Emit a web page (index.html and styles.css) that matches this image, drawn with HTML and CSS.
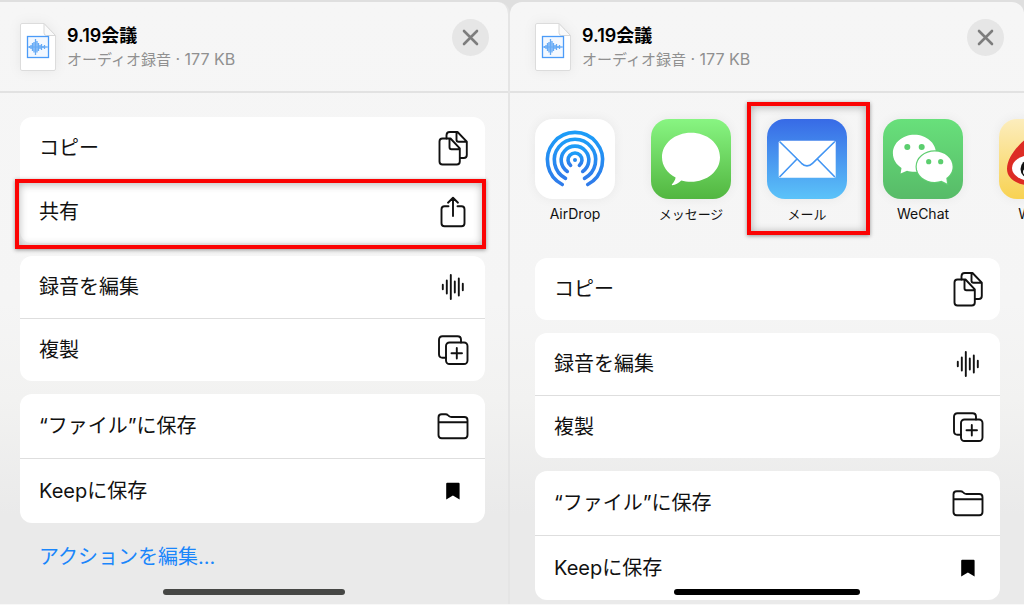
FILE: index.html
```html
<!DOCTYPE html>
<html lang="ja">
<head>
<meta charset="utf-8">
<meta name="viewport" content="width=device-width, initial-scale=1">
<title>9.19会議</title>
<link rel="stylesheet" href="styles.css">
</head>
<body>
<svg class="defs" aria-hidden="true">
  <defs>
    <linearGradient id="g-air" x1="0" y1="0" x2="0" y2="1"><stop offset="0" stop-color="#1c9df8"/><stop offset="1" stop-color="#2f7bea"/></linearGradient>
  </defs>
  <symbol id="i-file" viewBox="0 0 36 48">
    <path d="M2 .5H24L35.500 12.500V46a1.500 1.500 0 0 1-1.500 1.500H2A1.500 1.500 0 0 1 .5 46V2A1.500 1.500 0 0 1 2 .5z" fill="#fff" stroke="#dcdcdc"/>
    <path d="M24 .5V10a2.500 2.500 0 0 0 2.500 2.500h9z" fill="#fafafa" stroke="#d8d8d8"/>
    <rect x="7.500" y="13.500" width="21" height="21" fill="#f3f8ff" stroke="#4b9bf8" stroke-width="1.300"/>
    <path d="M9.500 23v2M11 22v4M12.500 20v8M14 19v10.500M15.500 16v16M17 18v11.500M18.500 20v8M20 22v4M21.500 21v6M23 23v2M24.500 22v4M26 23.500v1" stroke="#66aaf5" stroke-width="1.300"/>
    <path d="M8 24h20" stroke="#66aaf5"/>
  </symbol>
  <symbol id="i-close" viewBox="0 0 37 37"><path d="M12 12l13 13M25 12L12 25" stroke="#7d7d7d" stroke-width="2.600" stroke-linecap="round"/></symbol>
  <symbol id="i-copy" viewBox="0 0 32 36">
    <path d="M9.500 8.500V5.300Q9.500 2 12.800 2H20.500L29.800 11.700V25q0 3-3 3H23M19.500 2V9.700q0 2 2 2h8.300"/>
    <path d="M5.500 8.500H13.500L22.800 18.300V31.500q0 3-3 3H5.500q-3 0-3-3V11.500q0-3 3-3zM12.500 8.500v8.800q0 2 2 2h8.300"/>
  </symbol>
  <symbol id="i-share" viewBox="0 0 32 36"><path d="M11.500 12.200H7.500q-3 0-3 3V29.300q0 3 3 3H24.500q3 0 3-3V15.200q0-3-3-3H20.500M16 22V4M11 8.700L16 3.800L21 8.700"/></symbol>
  <symbol id="i-wave" viewBox="0 0 32 36"><path d="M5.800 15.800v4.400M9.800 11.500v13M13.800 6v24M17.800 12.500v11M21.800 9.500v17M25.800 14.800v6.400"/></symbol>
  <symbol id="i-dup" viewBox="0 0 32 36"><path d="M9 25.700H5.500q-3.500 0-3.500-3.500V7.800Q2 4.300 5.500 4.300H20.500Q24 4.300 24 7.800V10.500"/><rect x="9" y="10.500" width="21.500" height="21.500" rx="3.500"/><path d="M19.800 16v10.500M14.500 21.200H25"/></symbol>
  <symbol id="i-folder" viewBox="0 0 32 36"><path d="M1.500 14.200H30.500M1.500 27.300V9.500Q1.500 6.300 4.700 6.300H8.500Q10 6.300 11.200 7.400L12 8.100Q13 9 14.500 9H27.300Q30.500 9 30.500 12.200V27Q30.500 30.200 27.300 30.200H4.700Q1.500 30.200 1.500 27z"/></symbol>
  <symbol id="i-mark" viewBox="0 0 32 36"><path d="M9.200 10.700q0-1 1-1h11.400q1 0 1 1V26.500L15.900 22.500 9.200 26.500z" fill="#000" stroke="none"/></symbol>
</svg>

<div class="screens">
  <section class="sheet sheet-left">
    <header class="head">
      <svg class="file"><use href="#i-file"/></svg>
      <div class="info"><h1>9.19会議</h1><p>オーディオ録音<span class="latin"> · 177 KB</span></p></div>
      <button class="close" aria-label="閉じる"><svg><use href="#i-close"/></svg></button>
    </header>
    <main class="body">
      <div class="card">
        <button class="row">コピー<svg><use href="#i-copy"/></svg></button>
        <button class="row marked">共有<svg><use href="#i-share"/></svg></button>
      </div>
      <div class="card">
        <button class="row">録音を編集<svg><use href="#i-wave"/></svg></button>
        <button class="row">複製<svg><use href="#i-dup"/></svg></button>
      </div>
      <div class="card tall">
        <button class="row">“ファイル”に保存<svg><use href="#i-folder"/></svg></button>
        <button class="row">Keepに保存<svg><use href="#i-mark"/></svg></button>
      </div>
      <a class="edit" href="#">アクションを編集...</a>
    </main>
    <div class="home home-soft"></div>
  </section>

  <section class="sheet sheet-right">
    <header class="head">
      <svg class="file"><use href="#i-file"/></svg>
      <div class="info"><h1>9.19会議</h1><p>オーディオ録音<span class="latin"> · 177 KB</span></p></div>
      <button class="close" aria-label="閉じる"><svg><use href="#i-close"/></svg></button>
    </header>
    <nav class="apps">
      <button class="app">
        <svg class="tile airdrop" viewBox="0 0 80 80"><g fill="none" stroke="url(#g-air)" stroke-width="3.600" stroke-linecap="round"><path d="M27.300 65.500A27.600 27.600 0 1 1 52.700 65.500"/><path d="M30.500 59.300A20.700 20.700 0 1 1 49.500 59.300"/><path d="M32.300 52.400A13.800 13.800 0 1 1 47.700 52.400"/><path d="M35.600 46.400A7 7 0 1 1 44.400 46.400"/></g><circle cx="40" cy="41" r="2" fill="#2789ee"/></svg>
        <span class="name-latin">AirDrop</span>
      </button>
      <button class="app">
        <svg class="tile messages" viewBox="0 0 80 80"><path d="M40 13.800C56 13.800 69 24.500 69 38.300S56 62.800 40 62.800C36.500 62.800 33.200 62.400 30.300 61.500C27.700 64 24.300 66 21.200 66.200C20.600 66.100 20.700 65.500 21.200 65C23 63 24.300 60.800 24.600 58.500C16.300 54.300 11 46.800 11 38.300C11 24.500 24 13.800 40 13.800z" fill="#fff"/></svg>
        <span>メッセージ</span>
      </button>
      <button class="app marked">
        <svg class="tile mail" viewBox="0 0 80 80"><rect x="11.700" y="21.700" width="57" height="37" rx="1.500" fill="#fff"/><g fill="none" stroke="#4295f3" stroke-width="1.600"><path d="M12.500 22.500L34.500 44.300Q40 49.500 45.500 44.300L67.900 22.500"/><path d="M12.500 58L30 40M67.900 58L50.300 40"/></g></svg>
        <span>メール</span>
      </button>
      <button class="app">
        <svg class="tile wechat" viewBox="0 0 80 80"><path d="M31.400 15.800C43.300 15.800 53 24 53 34.300S43.300 52.800 31.400 52.800C28.600 52.800 26.200 52.400 24 51.700L17.600 54.500L18.500 49C13.200 45.600 9.900 40.300 9.900 34.300C9.900 24 19.500 15.800 31.400 15.800z" fill="#fff"/><path d="M51.700 32.500C61.700 32.500 69.600 39.300 69.600 47.700C69.600 52.300 67.200 56.300 63.300 59L64 64.500L58.500 61.800C56.400 62.500 54.100 62.900 51.700 62.900C41.700 62.900 33.700 56.100 33.700 47.700S41.700 32.500 51.700 32.500z" fill="#fff" stroke="#60ce72" stroke-width="2.400" paint-order="stroke"/><g fill="#5bce6e"><circle cx="24.300" cy="28" r="3"/><circle cx="38.700" cy="28" r="3"/><circle cx="45.700" cy="42.700" r="2.600"/><circle cx="57.700" cy="42.700" r="2.600"/></g></svg>
        <span class="name-latin">WeChat</span>
      </button>
      <button class="app">
        <svg class="tile weibo" viewBox="0 0 80 80"><path d="M28 19C20 25 8 38 8 50C8 61 21 67 36 67C54 67 65 57 65 48C65 41 59 39 55 37C56 28 49 27 40 31C42 22 36 15 28 19z" fill="#dd2c24"/><ellipse cx="33" cy="49" rx="20" ry="13" fill="#fff"/><circle cx="31" cy="50" r="9.500" fill="#111"/><circle cx="27" cy="53" r="3" fill="#fff"/></svg>
        <span class="name-latin">Weibo</span>
      </button>
    </nav>
    <main class="body">
      <div class="card">
        <button class="row">コピー<svg><use href="#i-copy"/></svg></button>
      </div>
      <div class="card">
        <button class="row">録音を編集<svg><use href="#i-wave"/></svg></button>
        <button class="row">複製<svg><use href="#i-dup"/></svg></button>
      </div>
      <div class="card tall">
        <button class="row">“ファイル”に保存<svg><use href="#i-folder"/></svg></button>
        <button class="row">Keepに保存<svg><use href="#i-mark"/></svg></button>
      </div>
    </main>
    <div class="home"></div>
  </section>
</div>
</body>
</html>
```
FILE: styles.css
```css
* { box-sizing: border-box; }

body {
  margin: 0;
  background: #dfdfdf;
  color: #111;
  font-family: Inter, "Noto Sans CJK JP", sans-serif;
}

button {
  margin: 0;
  padding: 0;
  border: 0;
  background: none;
  color: inherit;
  font: inherit;
  cursor: pointer;
}

.defs { position: absolute; width: 0; height: 0; }

.screens {
  display: grid;
  grid-template-columns: 510fr 514fr;
  min-height: 100vh;
  padding-top: 2px;
  border-bottom: 1px solid #f8f8f8;
}

.sheet {
  position: relative;
  min-width: 0;
  overflow: hidden;
  background: linear-gradient(#f6f6f6 0%, #f5f5f5 50%, #f2f2f1 66%, #eaeaea 85%, #eaeaea 100%);
}

.sheet-left {
  --start: 20px;
  --end: 23px;
  border-radius: 0 12px 0 0;
  border-right: 2px solid #e5e5e5;
}

.sheet-right { --start: 25px; --end: 24px; border-radius: 12px 12px 0 0; }

.head {
  display: flex;
  align-items: center;
  gap: 11px;
  padding: 17px 20px 16px var(--start);
  border-bottom: 2px solid #e2e2e2;
}

.sheet-left .head { padding-right: 19px; }

.file {
  width: 36px;
  height: 48px;
  filter: drop-shadow(0 0 6px rgba(0, 0, 0, 0.06));
}

.info { height: 56px; padding-top: 5px; }

.info h1 {
  margin: 0;
  font-size: 18px;
  line-height: 24px;
  font-weight: 600;
  color: #000;
}

.info p {
  margin: 0;
  font-size: 15px;
  line-height: 23px;
  color: #909090;
}

.latin { font-size: 16px; }

.close {
  align-self: flex-start;
  width: 37px;
  height: 37px;
  margin-left: auto;
  border-radius: 50%;
  background: #e6e6e6;
}

.close svg { display: block; width: 37px; height: 37px; }

.body {
  display: flex;
  flex-direction: column;
  gap: 13px;
  padding: 0 var(--end) 4px var(--start);
}

.sheet-left .body { padding-top: 24px; }

.card {
  display: flex;
  flex-direction: column;
  border-radius: 12px;
  background: #fff;
}

.row {
  position: relative;
  display: flex;
  align-items: center;
  justify-content: space-between;
  height: 62px;
  padding: 0 16px 0 19px;
  font-size: 20px;
  line-height: 24px;
  text-align: left;
}

.row + .row { height: 63px; border-top: 1px solid #dedede; }
.row + .row.marked { height: 64px; }
.tall .row { height: 64px; }
.tall .row + .row { height: 65px; }

.row svg {
  width: 32px;
  height: 36px;
  fill: none;
  stroke: #111;
  stroke-width: 1.900;
  stroke-linecap: round;
  stroke-linejoin: round;
}

.edit {
  align-self: flex-start;
  margin-top: 9px;
  padding-left: 19px;
  color: #1a86fb;
  font-size: 20px;
  line-height: 24px;
  text-decoration: none;
}

.apps {
  display: flex;
  gap: 36px;
  padding: 26px 0 35px var(--start);
}

.app {
  position: relative;
  display: flex;
  flex: none;
  flex-direction: column;
  align-items: center;
  gap: 6px;
  width: 80px;
  font-size: 13px;
  line-height: 18px;
}

.name-latin { font-size: 14px; }

.tile {
  display: block;
  width: 80px;
  height: 80px;
  border-radius: 18px;
  box-shadow: 0 0 12px rgba(0, 0, 0, 0.06);
}

.airdrop { background: #fff; }
.messages { background: linear-gradient(#88f582, #52b640); }
.mail { background: linear-gradient(#376ae6, #5bc3f9); }
.wechat { background: linear-gradient(#68e07b, #57bb68); }
.weibo { background: linear-gradient(#fcedbd, #f8d252); }

/* Red callout frames */
.marked::after {
  content: "";
  position: absolute;
  border: 4px solid #fb0303;
  box-shadow: 0 1px 4px rgba(0, 0, 0, 0.4), inset 0 1px 8px rgba(0, 0, 0, 0.3);
  pointer-events: none;
}

.row.marked::after { inset: -1px -1px -6px -5px; }
.app.marked::after { inset: -17px -23px -12px -20px; }

.home {
  position: absolute;
  bottom: 9px;
  left: 32%;
  width: 36%;
  height: 6px;
  border-radius: 3px;
  background: #000;
}

.home-soft { background: #464745; }
```
